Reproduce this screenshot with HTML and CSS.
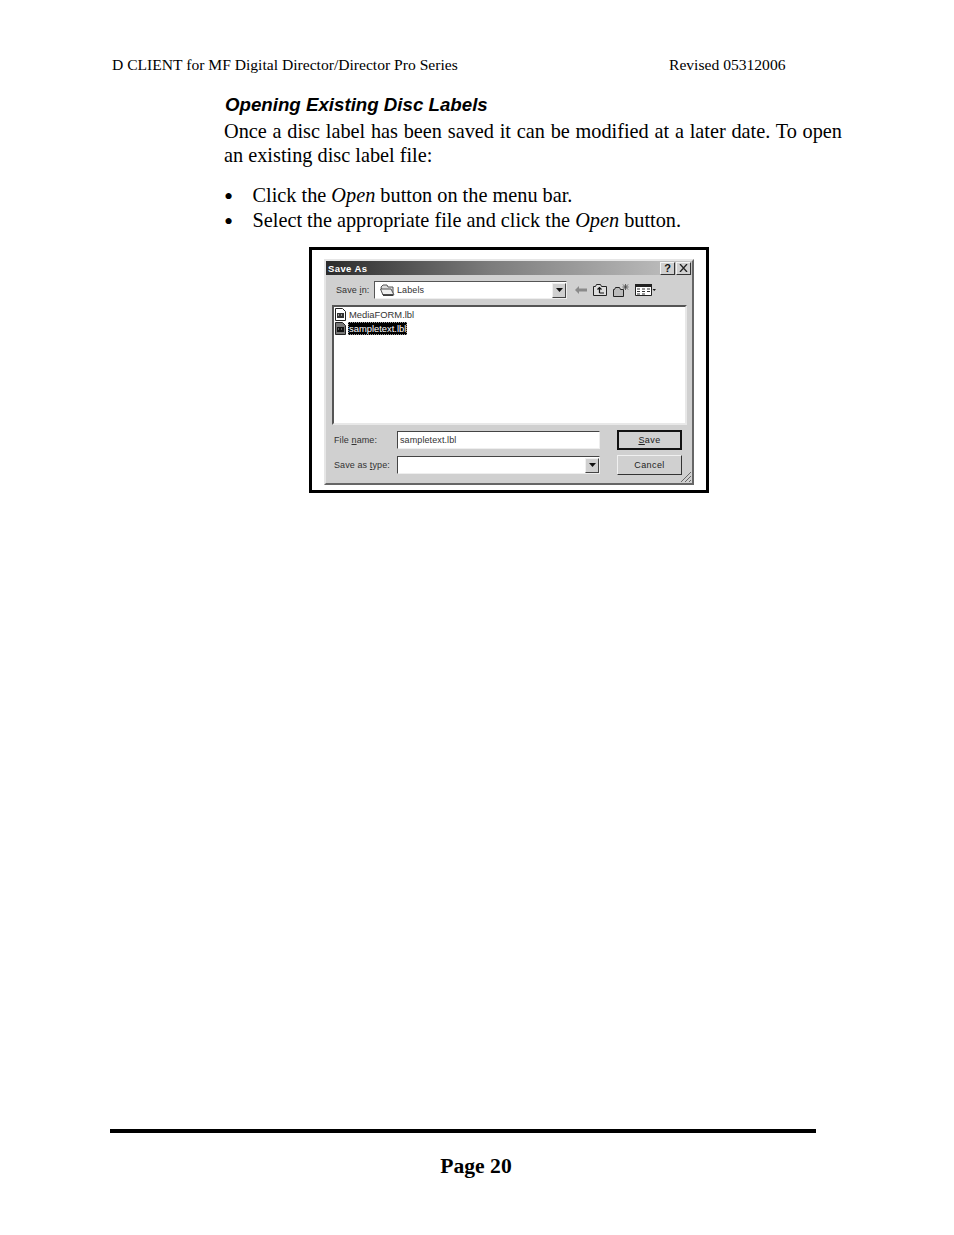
FILE: index.html
```html
<!DOCTYPE html>
<html lang="en">
<head>
<meta charset="utf-8">
<title>Page 20</title>
<link rel="stylesheet" href="styles.css">
</head>
<body>
<div class="page">
  <header class="running-head">
    <span class="head-left">D CLIENT for MF Digital Director/Director Pro Series</span>
    <span class="head-right">Revised 05312006</span>
  </header>
  <main class="content">
    <h2 class="section-title">Opening Existing Disc Labels</h2>
    <p class="intro">Once a disc label has been saved it can be modified at a later date. To open an existing disc label file:</p>
    <ul class="steps">
      <li>Click the <em>Open</em> button on the menu bar.</li>
      <li>Select the appropriate file and click the <em>Open</em> button.</li>
    </ul>
  </main>
  <div class="frame">
    <div class="dialog">
      <div class="titlebar">
        <span class="title-text">Save As</span>
        <span class="title-buttons">
          <span class="cap-btn">?</span>
          <span class="cap-btn cap-x"><svg width="9" height="8" viewBox="0 0 9 8"><path d="M1 0l7 8M8 0L1 8" fill="none" stroke="#222" stroke-width="1.300"/></svg></span>
        </span>
      </div>
      <div class="toolbar">
        <span class="label label-in">Save <u>i</u>n:</span>
        <span class="combo combo-top">
          <svg class="folder" width="15" height="12" viewBox="0 0 15 12"><path d="M1 3l2-2h4l1 2h5v8H3z" fill="#ddd" stroke="#555"/><path d="M.500 5h10.500l3 6H3z" fill="#eee" stroke="#555"/><path d="M3 11h10" stroke="#111" stroke-width="1.200"/></svg>
          <span class="combo-text">Labels</span>
          <span class="drop"><svg width="7" height="4" viewBox="0 0 7 4"><path d="M0 0h7L3.500 4z" fill="#111"/></svg></span>
        </span>
        <span class="tools">
          <svg class="tool-back" width="12" height="8" viewBox="0 0 12 8"><path d="M0 4L4 0v2.500h8v3H4V8z" fill="#8a8a8a"/></svg>
          <svg class="tool-up" width="14" height="12" viewBox="0 0 14 12"><path d="M.500 2.500h2l1-2h4l1 2h5v9H.500z" fill="#ddd" stroke="#222"/><path d="M6.500 9V3.500M4.500 5.500l2-2 2 2M6.500 9h4.500" fill="none" stroke="#111" stroke-width="1.200"/></svg>
          <svg class="tool-new" width="16" height="13" viewBox="0 0 16 13"><path d="M.500 5.500h1l1-2h4l1 2h3v7H.500z" fill="#bbb" stroke="#222"/><path d="M12.500 0v6M9.500 3h6M10 .500l5 5M15 .500l-5 5" stroke="#444" stroke-width=".8"/></svg>
          <svg class="tool-views" width="21" height="12" viewBox="0 0 21 12"><path d="M.500.500h16v11H.500z" fill="#fff" stroke="#222"/><path d="M0 0h17v3H0z" fill="#222"/><path d="M2 4.500h3v1H2zM7 4.500h3v1H7zM12 4.500h3v1h-3zM2 7h3v1H2zM7 7h3v1H7zM12 7h3v1h-3zM2 9.500h3v1H2zM7 9.500h3v1H7z" fill="#333"/><path d="M17.500 5h3.500l-1.750 2z" fill="#111"/></svg>
        </span>
      </div>
      <div class="file-list">
        <div class="file">
          <svg class="doc" width="11" height="13" viewBox="0 0 11 13"><path d="M.500.500h7l3 3v9h-10z" fill="#fff" stroke="#222"/><path d="M2 5h7v5H2z" fill="#333"/><path d="M3 7h1M6 7h1" stroke="#fff"/></svg>
          <span class="file-name">MediaFORM.lbl</span>
        </div>
        <div class="file file-selected">
          <svg class="doc" width="11" height="13" viewBox="0 0 11 13"><path d="M.500.500h7l3 3v9h-10z" fill="#777" stroke="#222"/><path d="M2 5h7v5H2z" fill="#111"/><path d="M3 7h1M6 7h1" stroke="#aaa"/></svg>
          <span class="file-name">sampletext.lbl</span>
        </div>
      </div>
      <div class="form">
        <span class="label">File <u>n</u>ame:</span>
        <span class="field"><span class="combo-text">sampletext.lbl</span></span>
        <span class="btn btn-default"><span><u>S</u>ave</span></span>
        <span class="label">Save as <u>t</u>ype:</span>
        <span class="field field-drop"><span class="drop"><svg width="7" height="4" viewBox="0 0 7 4"><path d="M0 0h7L3.500 4z" fill="#111"/></svg></span></span>
        <span class="btn"><span>Cancel</span></span>
      </div>
      <svg class="grip" width="12" height="12" viewBox="0 0 12 12"><path d="M11 1L1 11M11 5l-6 6M11 9l-2 2" stroke="#666" fill="none"/></svg>
    </div>
  </div>
  <footer class="page-foot">Page 20</footer>
</div>
</body>
</html>
```
FILE: styles.css
```css
* { box-sizing: border-box; }
html, body { margin: 0; padding: 0; background: #fff; }
.page {
  width: 954px;
  height: 1235px;
  overflow: hidden;
  color: #000;
  font-family: "Liberation Serif", serif;
  padding-top: 56px;
}
.running-head {
  display: flex;
  font-size: 15.600px;
  line-height: 18px;
  padding-left: 112px;
}
.head-left { width: 557px; }
.content { margin-left: 224px; width: 618px; }
.section-title {
  margin: 19px 0 0 1px;
  font: italic bold 18.700px/24px "Liberation Sans", sans-serif;
}
.intro {
  margin: 2px 0 0;
  font-size: 20.300px;
  line-height: 24px;
  text-align: justify;
}
.steps {
  list-style: none;
  margin: 16px 0 0;
  padding: 0 0 0 28.500px;
  font-size: 20.300px;
  line-height: 25px;
}
.steps li::before {
  content: "\2022";
  display: inline-block;
  width: 28.500px;
  margin-left: -28.500px;
  font-size: 26px;
  line-height: 0;
  vertical-align: -3px;
}
.frame {
  width: 400px;
  height: 246px;
  margin: 14px 0 0 309px;
  border: 3px solid #000;
  padding: 9px 12px 5px 12px;
  background: #fff;
}
.dialog {
  position: relative;
  height: 100%;
  background: #d0d0d0;
  border: 2px solid;
  border-color: #e6e6e6 #666 #666 #e6e6e6;
  font-family: "Liberation Sans", sans-serif;
  font-size: 9px;
  color: #333;
}
.titlebar {
  height: 14px;
  display: flex;
  align-items: center;
  justify-content: space-between;
  padding: 0 1px 0 2px;
  background: linear-gradient(90deg, #2b2b2b 0%, #7c7c7c 45%, #c4c4c4 100%);
}
.title-text { color: #fff; font-weight: bold; font-size: 9.500px; letter-spacing: .4px; }
.title-buttons { display: flex; gap: 1px; }
.cap-btn {
  width: 15px;
  height: 13px;
  display: flex;
  align-items: center;
  justify-content: center;
  background: #d0d0d0;
  border: 1px solid;
  border-color: #f4f4f4 #333 #333 #f4f4f4;
  font-weight: bold;
  font-size: 11px;
  color: #111;
}
.toolbar {
  display: flex;
  align-items: center;
  height: 18px;
  margin-top: 6px;
  padding-left: 10px;
}
.label { white-space: nowrap; letter-spacing: .1px; color: #333; }
.label-in { width: 38px; }
.combo {
  display: flex;
  align-items: center;
  width: 193px;
  height: 18px;
  background: #fff;
  border: 1px solid;
  border-color: #555 #eee #eee #555;
  padding-left: 5px;
}
.combo-text { letter-spacing: .1px; }
.folder { margin-right: 2px; }
.drop {
  margin-left: auto;
  width: 14px;
  height: 15px;
  display: flex;
  align-items: center;
  justify-content: center;
  background: #d0d0d0;
  border: 1px solid;
  border-color: #f0f0f0 #444 #444 #f0f0f0;
}
.tools { display: flex; align-items: center; gap: 6px; margin-left: 8px; }
.file-list {
  height: 120px;
  margin: 6px 5px 0 6px;
  background: #fff;
  border: 2px solid;
  border-color: #555 #e8e8e8 #e8e8e8 #555;
  padding: 0 0 0 1px;
}
.file { display: flex; align-items: center; height: 14px; }
.doc { margin-right: 2px; flex: none; }
.file-name { font-size: 9.400px; line-height: 13px; padding: 0 1px; }
.file-selected .file-name { background: #000; color: #fff; outline: 1px dotted #999; outline-offset: -1px; }
.form {
  display: grid;
  grid-template-columns: 63px 203px 82px;
  grid-template-rows: 19px 20px;
  row-gap: 6px;
  align-items: center;
  margin: 5px 0 0 8px;
}
.field {
  display: flex;
  align-items: center;
  height: 18px;
  background: #fff;
  border: 1px solid;
  border-color: #444 #eee #eee #444;
  padding-left: 2px;
}
.field-drop { padding-left: 0; justify-content: flex-end; }
.btn {
  justify-self: end;
  width: 65px;
  height: 20px;
  display: flex;
  align-items: center;
  justify-content: center;
  background: #d0d0d0;
  border: 1px solid;
  border-color: #f0f0f0 #333 #333 #f0f0f0;
  letter-spacing: .4px;
  color: #222;
}
.btn-default { border: 2px solid #111; }
.grip { position: absolute; right: 0; bottom: 0; }
.page-foot {
  margin: 636px 0 0 110px;
  width: 706px;
  border-top: 4px solid #000;
  padding: 19px 0 0 26px;
  text-align: center;
  font-weight: bold;
  font-size: 21.600px;
  line-height: 28px;
}
```
